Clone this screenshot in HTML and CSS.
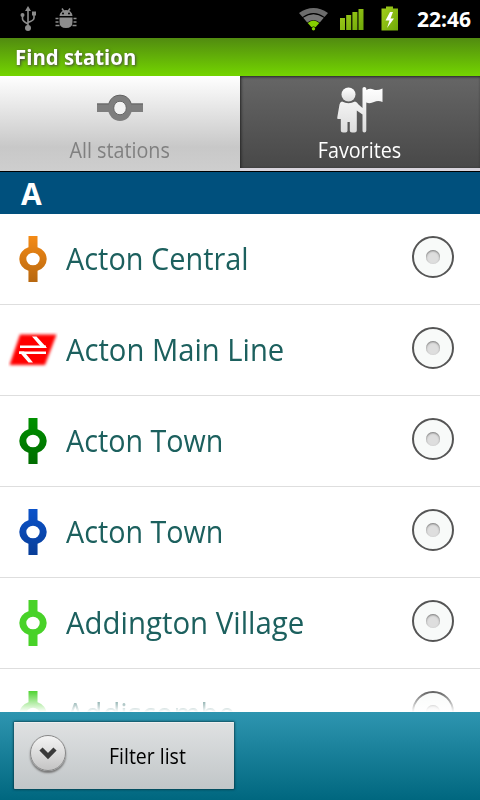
FILE: index.html
```html
<!DOCTYPE html>
<html lang="en">
<head>
    <meta charset="UTF-8">
    <meta name="viewport" content="width=device-width, initial-scale=1.0">
    <title>Find station</title>
    <link rel="stylesheet" href="styles.css">
</head>
<body>

<!-- Shared icon shapes -->
<svg class="defs" width="0" height="0">
    <defs>
        <linearGradient id="shade" x1="0" y1="0" x2="0" y2="1">
            <stop offset="0" stop-color="#000" stop-opacity="0"/>
            <stop offset="1" stop-color="#000" stop-opacity="0.25"/>
        </linearGradient>
        <linearGradient id="lime" x1="0" y1="0" x2="1" y2="1">
            <stop offset="0" stop-color="#a4cf1c"/>
            <stop offset="1" stop-color="#6ea808"/>
        </linearGradient>
        <linearGradient id="person" x1="0" y1="0" x2="0" y2="1">
            <stop offset="0" stop-color="#fff"/>
            <stop offset="1" stop-color="#dcdcdc"/>
        </linearGradient>
        <filter id="soft" x="-10%" y="-15%" width="120%" height="130%">
            <feGaussianBlur stdDeviation="1.5"/>
        </filter>
        <path id="stop" fill-rule="evenodd" d="M9.500 0h9v11.200A13.700 12.500 0 0 1 18.500 34.800V46h-9V34.800A13.700 12.500 0 0 1 9.500 11.200zM14 16.700a6.700 6.300 0 1 0 0 12.600a6.700 6.300 0 1 0 0-12.600z"/>
    </defs>
</svg>

<div class="screen">
    <div class="status-bar">
        <svg class="usb" width="18" height="26" viewBox="0 0 18 26" fill="none" stroke="#8c8c8c" stroke-width="1.6">
            <path d="M8 4v18M2.500 10v3q0 2 5.500 5M14 8v4q0 2.500-6 4.500"/>
            <path d="M8 0l3 5h-6z" fill="#8c8c8c" stroke="none"/>
            <circle cx="8" cy="22" r="3" fill="#8c8c8c" stroke="none"/>
            <circle cx="2.500" cy="9" r="2" fill="#8c8c8c" stroke="none"/>
            <path d="M12 5.500h4v4h-4z" fill="#8c8c8c" stroke="none"/>
        </svg>
        <svg class="bug" width="22" height="22" viewBox="0 0 22 22" fill="#8c8c8c">
            <path d="M4.500 8a6.500 6 0 0 1 13 0zM4.500 9.500h13v4.500q0 6-6.500 6t-6.500-6z"/>
            <path d="M7 0.500l2 3M15 0.500l-2 3M3.500 10.500h-3M3.500 14h-3M4.500 17.500h-4M18.500 10.500h3M18.500 14h3M17.500 17.500h4" stroke="#8c8c8c" stroke-width="1.500"/>
            <circle cx="8" cy="5.500" r="1" fill="#000"/><circle cx="14" cy="5.500" r="1" fill="#000"/>
        </svg>
        <svg class="wifi" width="30" height="24" viewBox="0 0 30 24">
            <path d="M0 6Q14.500-4 29 6L25.500 10Q14.500 2 3.500 10z" fill="#6c6c6c"/>
            <path d="M4.200 10.800Q14.500 3.500 24.800 10.800L20.800 15.500Q14.500 10.500 8.200 15.500z" fill="#777"/>
            <path d="M8.700 16Q14.500 11 20.300 16L16.500 20.200Q14.500 19 12.500 20.200z" fill="#86cf00"/>
            <circle cx="14.500" cy="21.700" r="1.700" fill="#86cf00"/>
        </svg>
        <svg class="signal" width="24" height="22" viewBox="0 0 24 22" fill="url(#lime)">
            <path d="M0 10h5v12H0zM6.200 7h5v15h-5zM12.400 4h5v18h-5zM18.500 1h5v21h-5z"/>
        </svg>
        <svg class="battery" width="18" height="25" viewBox="0 0 18 25">
            <path d="M5 0.500h7V2.500h5v22H0.500v-22H5z" fill="url(#lime)"/>
            <path d="M9 6L4.500 14.500h4L6 22l7-9.500H9.500L12 6z" fill="#fff"/>
        </svg>
        <span class="clock">22:46</span>
    </div>

    <div class="title-bar"><span class="title">Find station</span></div>

    <div class="tabs">
        <div class="tab tab-active">
            <svg class="tab-stop" width="46" height="28" viewBox="0 0 46 28">
                <path fill="#7e7e7e" d="M0 9.500h46v8.500H0z"/>
                <ellipse cx="23" cy="14" rx="12" ry="13" fill="#7e7e7e"/>
                <path d="M0 10h11.800M34.200 10H46M11.800 9.500A12 13 0 0 1 34.200 9.500" stroke="#636363" fill="none"/>
                <ellipse cx="23" cy="14" rx="6.300" ry="6.800" fill="#f2f2f2" stroke="#686868"/>
            </svg>
            <span class="tab-label label-all">All stations</span>
        </div>
        <div class="tab tab-dark">
            <svg class="tab-person" width="47" height="46" viewBox="0 0 47 46" fill="url(#person)">
                <circle cx="11.500" cy="7.500" r="7"/>
                <path d="M5 14.500Q11.500 18 18 14.500Q20 15 21.500 17.500L25.500 21V1.500Q25.500 0 27.300 0T29.300 1.500V3Q33 1 36.500 2.500T45.500 1.500V15Q41 13 37 15T29.300 15.500V43.500Q29.300 45.500 27.300 45.500T25.500 43.500V27.500L19.800 23.500V43.500Q19.800 45.500 17.500 45.500H15Q12.800 45.500 12.800 43.500V35H10.500V43.500Q10.500 45.500 8.500 45.500H6Q3.800 45.500 3.800 43.500V32H0.500Q0 31 0.500 29L2.500 17.500Q3 15 5 14.500z"/>
            </svg>
            <span class="tab-label label-fav">Favorites</span>
        </div>
    </div>

    <div class="letter"><span>A</span></div>

    <div class="stations">
        <div class="station">
            <svg class="line-icon orange" width="28" height="46" viewBox="0 0 28 46"><use href="#stop"/><use href="#stop" fill="url(#shade)"/></svg>
            <span class="name n-central">Acton Central</span>
            <span class="radio"></span>
        </div>
        <div class="station">
            <svg class="rail-icon" width="50" height="36" viewBox="0 0 50 36">
                <path d="M12 2.500H48.500L37 33H1.500z" fill="#f00" filter="url(#soft)"/>
                <path d="M12 14.700H38M38 20.700H11" stroke="#fff" stroke-width="2.500"/>
                <path d="M24 4.500h4.500L39 15.900h-5zM11 19.500h5L25 30.500h-4.500z" fill="#fff"/>
            </svg>
            <span class="name n-main">Acton Main Line</span>
            <span class="radio"></span>
        </div>
        <div class="station">
            <svg class="line-icon green" width="28" height="46" viewBox="0 0 28 46"><use href="#stop"/><use href="#stop" fill="url(#shade)"/></svg>
            <span class="name n-town">Acton Town</span>
            <span class="radio"></span>
        </div>
        <div class="station">
            <svg class="line-icon blue" width="28" height="46" viewBox="0 0 28 46"><use href="#stop"/><use href="#stop" fill="url(#shade)"/></svg>
            <span class="name n-town">Acton Town</span>
            <span class="radio"></span>
        </div>
        <div class="station">
            <svg class="line-icon tram" width="28" height="46" viewBox="0 0 28 46"><use href="#stop"/></svg>
            <span class="name n-village">Addington Village</span>
            <span class="radio"></span>
        </div>
        <div class="station">
            <svg class="line-icon tram" width="28" height="46" viewBox="0 0 28 46"><use href="#stop"/></svg>
            <span class="name n-combe">Addiscombe</span>
            <span class="radio"></span>
        </div>
        <div class="fade"></div>
    </div>

    <div class="footer">
        <button class="filter" type="button">
            <span class="arrow">
                <svg width="18" height="14" viewBox="0 0 18 14"><path d="M2 3l7 7 7-7" fill="none" stroke="#3a3a3a" stroke-width="4.500"/></svg>
            </span>
            <span class="filter-label">Filter list</span>
        </button>
    </div>
</div>

</body>
</html>
```
FILE: styles.css
```css
* {
    margin: 0;
    padding: 0;
    box-sizing: border-box;
}
body {
    font-family: "Open Sans", "Noto Sans", sans-serif;
    background-color: #fff;
}
/* Keeps the shared shapes out of the page flow */
.defs {
    position: absolute;
}
.screen {
    width: 480px;
    height: 800px;
    display: flex;
    flex-direction: column;
    overflow: hidden;
}
svg {
    display: block;
    flex: none;
}
span {
    white-space: nowrap;
}

/* Status bar */
.status-bar {
    height: 38px;
    background-color: #000;
    display: flex;
    align-items: flex-start;
    padding: 0 10px 0 20px;
}
.usb {
    margin-top: 6px;
}
.bug {
    margin: 8px 0 0 17px;
}
.wifi {
    margin: 7px 0 0 222px;
}
.signal {
    margin: 8px 0 0 11px;
}
.battery {
    margin: 6px 0 0 17px;
}
.clock {
    color: #fff;
    font-size: 21px;
    font-weight: 700;
    line-height: 38px;
    margin-left: 18px;
}

/* Title */
.title-bar {
    height: 38px;
    padding-left: 15px;
    background: linear-gradient(#518b10, #74d500);
}
.title {
    display: inline-block;
    color: #fff;
    font-size: 21px;
    font-weight: 700;
    line-height: 38px;
    text-shadow: 1px 1px 3px #444;
    transform: scaleX(0.97);
    transform-origin: left;
}

/* Tabs */
.tabs {
    height: 96px;
    display: flex;
    border-bottom: 1px solid #000;
}
.tab {
    flex: 1;
    display: flex;
    flex-direction: column;
    align-items: center;
}
.tab-active {
    background: linear-gradient(#fff, #c8c8c8 75%, #cecece);
    color: #808080;
}
.tab-dark {
    background: linear-gradient(#666, #484848);
    color: #fff;
    border-bottom: 3px solid #d8d4dc;
    box-shadow: inset 1px 1px 3px #222;
}
.tab-stop {
    margin-top: 18px;
}
.tab-person {
    margin-top: 11px;
}
.tab-label {
    font-size: 21.500px;
    line-height: 28px;
    transform: scaleX(0.918);
}
.label-all {
    margin-top: 14px;
}
.label-fav {
    margin: 3px 1px 0 0;
}

/* Section header */
.letter {
    height: 42px;
    background-color: #00507d;
    color: #fff;
    font-size: 30px;
    font-weight: 700;
    line-height: 44px;
    padding-left: 21px;
}

/* Station list */
.stations {
    position: relative;
    height: 498px;
    overflow: hidden;
}
.station {
    height: 91px;
    border-bottom: 1px solid #dedede;
    display: flex;
    align-items: center;
}
.line-icon {
    margin: 0 19.500px 0 18.500px;
}
.rail-icon {
    margin: 0 8px 0 8px;
}
.orange {
    fill: #f48a15;
}
.green {
    fill: #009000;
}
.blue {
    fill: #0b52ca;
}
.tram {
    fill: #48d228;
}
.name {
    color: #1c605e;
    font-size: 31px;
    line-height: 40px;
    margin-bottom: 2px;
    transform-origin: left;
}
.n-central {
    transform: scaleX(0.932);
}
.n-main {
    transform: scaleX(0.942);
}
.n-town {
    transform: scaleX(0.926);
}
.n-village {
    transform: scaleX(0.948);
}
.n-combe {
    transform: scaleX(0.945);
}
.radio {
    width: 42px;
    height: 42px;
    margin: 0 26px 4px auto;
    border: 2px solid #555;
    border-radius: 50%;
    background-color: #f8faf9;
    display: flex;
    align-items: center;
    justify-content: center;
}
.radio::after {
    content: "";
    width: 14px;
    height: 14px;
    border-radius: 50%;
    background-color: #dedede;
    box-shadow: inset 0 1px 2px #777;
}
.fade {
    position: absolute;
    left: 0;
    right: 0;
    bottom: 0;
    height: 22px;
    background: linear-gradient(rgba(255, 255, 255, 0), #fff);
}

/* Footer */
.footer {
    height: 88px;
    padding: 10px 14px;
    background: linear-gradient(#2e95b0, #00677f);
}
.filter {
    width: 220px;
    height: 67px;
    display: flex;
    align-items: center;
    padding-left: 16px;
    border: none;
    border-radius: 1px;
    background: linear-gradient(#dfe1e2, #c1c6c8);
    box-shadow: 0 0 2px 1px rgba(0, 40, 50, 0.6), inset 0 1px 0 #eee;
    font-family: inherit;
    color: #000;
}
.arrow {
    width: 36px;
    height: 36px;
    margin-bottom: 5px;
    border: 1px solid #888;
    border-radius: 50%;
    background: linear-gradient(#f4f4f4, #c4c4c4);
    box-shadow: 0 2px 2px #777;
    display: flex;
    align-items: center;
    justify-content: center;
}
.filter-label {
    font-size: 21.500px;
    margin-left: 43px;
    transform: scaleX(0.906);
    transform-origin: left;
}
```
